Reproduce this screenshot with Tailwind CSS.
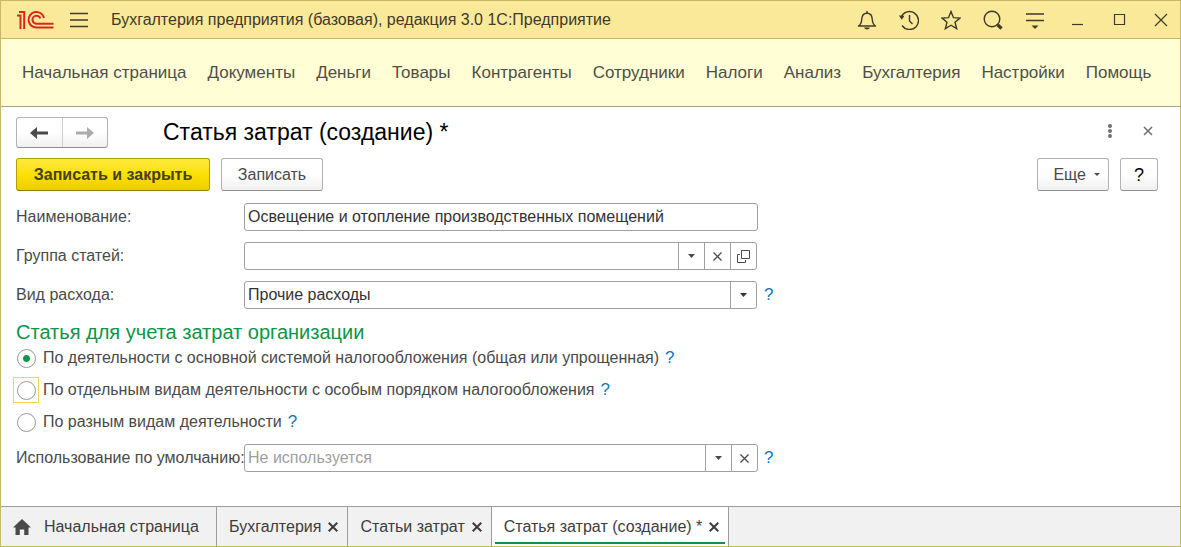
<!DOCTYPE html>
<html lang="ru">
<head>
<meta charset="utf-8">
<meta name="viewport" content="width=device-width, initial-scale=1">
<title>Статья затрат (создание)</title>
<script src="https://cdn.jsdelivr.net/npm/@tailwindcss/browser@4"></script>
</head>
<body class="flex min-h-screen flex-col border border-[#c9b869] bg-white font-['Liberation_Sans',Arial,sans-serif] text-base text-[#4a4a4a]">

<header class="flex h-[38px] items-center border-b border-[#c9b765] bg-[#fbe99a] pr-[9px] pl-4 text-[#403a28]">
  <svg class="h-5 w-[38px]" viewBox="0 0 38 20" fill="none" stroke="#d9271c" stroke-width="2" role="img" aria-label="1С">
    <path d="M0 5.500h3.500V19M2 2h5.200V19"/>
    <path d="M36.500 17.500H19.500A7.800 7.800 0 1 1 27 8"/>
    <path d="M36.500 13.700H20A4 4 0 1 1 23.300 8.500"/>
  </svg>
  <button class="ml-[15px] cursor-pointer" aria-label="Главное меню">
    <svg class="h-5 w-[18px]" viewBox="0 0 18 20" stroke="currentColor" stroke-width="1.300"><path d="M0 3.500h18M0 10h18M0 16.500h18"/></svg>
  </button>
  <p class="ml-[23px] grow whitespace-nowrap">Бухгалтерия предприятия (базовая), редакция 3.0 1С:Предприятие</p>
  <div class="flex items-center gap-[22px]">
    <button aria-label="Уведомления"><svg class="size-5" viewBox="0 0 20 20" fill="none" stroke="currentColor" stroke-width="1.400" stroke-linejoin="round"><path d="M1.500 16h17c-2-1.300-3-3-3.300-7C15 5 13 3.200 10 3.200S5 5 4.800 9c-.3 4-1.300 5.700-3.300 7z"/><path d="M10 3V1"/><path d="M7 17.500h6c-.6 1.300-1.600 2-3 2s-2.400-.7-3-2z" fill="currentColor" stroke="none"/></svg></button>
    <button aria-label="История"><svg class="size-5" viewBox="0 0 20 20" fill="none" stroke="currentColor" stroke-width="1.400"><path d="M2.200 7A9 9 0 1 1 3 15.500"/><path d="M10.500 5v6l3 3"/><path d="M-.2 5.500l5.700.3-2.700 4z" fill="currentColor" stroke="none"/></svg></button>
    <button aria-label="Избранное"><svg class="size-5" viewBox="0 0 20 20" fill="none" stroke="currentColor" stroke-width="1.400" stroke-linejoin="miter"><path d="M10 1.500l2.500 6.200 6.500.4-5 4.200 1.700 6.400L10 15.200l-5.700 3.500L6 12.300 1 8.100l6.500-.4z"/></svg></button>
    <button aria-label="Поиск"><svg class="size-5" viewBox="0 0 20 20" fill="none" stroke="currentColor" stroke-width="1.400"><circle cx="9" cy="9" r="7.800"/><path d="M14 14l1.500 1.500"/><path d="M14.800 15l3.700 3.500" stroke-width="3.200"/></svg></button>
    <button aria-label="Сервис"><svg class="size-5" viewBox="0 0 20 20" fill="none" stroke="currentColor" stroke-width="1.400"><path d="M1 4h18M1 10.500h18"/><path d="M6.500 15.500h7L10 19z" fill="currentColor" stroke="none"/></svg></button>
    <button aria-label="Свернуть"><svg class="size-5" viewBox="0 0 20 20" stroke="currentColor" stroke-width="1.200"><path d="M5 14.500h11"/></svg></button>
    <button aria-label="Развернуть"><svg class="size-5" viewBox="0 0 20 20" fill="none" stroke="currentColor" stroke-width="1.200"><path d="M5.500 4.500h10v10h-10z"/></svg></button>
    <button aria-label="Закрыть окно"><svg class="size-5" viewBox="0 0 20 20" stroke="currentColor" stroke-width="1.200"><path d="M4 4l12 12M16 4L4 16"/></svg></button>
  </div>
</header>

<nav class="flex h-[68px] items-center gap-[21px] border-b border-[#a3a68a] bg-[#fffed5] px-[21px] text-[17px] whitespace-nowrap text-[#4f4f47]">
  <a href="#">Начальная страница</a>
  <a href="#">Документы</a>
  <a href="#">Деньги</a>
  <a href="#">Товары</a>
  <a href="#">Контрагенты</a>
  <a href="#">Сотрудники</a>
  <a href="#">Налоги</a>
  <a href="#">Анализ</a>
  <a href="#">Бухгалтерия</a>
  <a href="#">Настройки</a>
  <a href="#">Помощь</a>
</nav>

<main class="px-[15px] pt-[10px]">
  <div class="flex h-[31px] items-center">
    <div class="flex h-full w-[92px] rounded-[3px] border border-[#b3b3b3] border-b-[#8f8f8f] bg-linear-to-b from-white from-50% to-[#f0f0f0]">
      <button class="flex flex-1 items-center justify-center border-r border-[#cfcfcf] text-[#4a4a4a]" aria-label="Назад"><svg class="h-3 w-[18px]" viewBox="0 0 18 12" fill="currentColor"><path d="M0 6l7-6v4.500h11v3H7V12z"/></svg></button>
      <button class="flex flex-1 items-center justify-center text-[#ababab]" aria-label="Вперед"><svg class="h-3 w-[18px]" viewBox="0 0 18 12" fill="currentColor"><path d="M18 6l-7-6v4.500H0v3h11V12z"/></svg></button>
    </div>
    <h1 class="ml-[55px] grow text-[23px] text-black">Статья затрат (создание) *</h1>
    <div class="flex items-center gap-[25px] pr-3 pb-[3px] text-[#707070]">
      <button aria-label="Действия"><svg class="h-4 w-4" viewBox="0 0 16 16" fill="currentColor"><circle cx="8" cy="3" r="2"/><circle cx="8" cy="8" r="2"/><circle cx="8" cy="13" r="2"/></svg></button>
      <button aria-label="Закрыть форму"><svg class="size-[10px]" viewBox="0 0 10 10" stroke="currentColor" stroke-width="1.600"><path d="M1 1l8 8M9 1L1 9"/></svg></button>
    </div>
  </div>

  <div class="mt-[10px] mr-[7px] flex h-[33px] gap-[11px]">
    <button class="w-[194px] rounded-[3px] border border-[#b59f00] border-b-[#8f7d00] bg-linear-to-b from-[#ffe838] via-[#fbe000] to-[#ecce00] font-bold text-[#454019]">Записать и закрыть</button>
    <button class="mr-auto w-[102px] rounded-[3px] border border-[#b3b3b3] border-b-[#8f8f8f] bg-linear-to-b from-white from-50% to-[#f0f0f0]">Записать</button>
    <button class="flex w-[72px] items-center justify-end gap-2 rounded-[3px] border border-[#b3b3b3] border-b-[#8f8f8f] bg-linear-to-b from-white from-50% to-[#f0f0f0] pr-2">Еще<svg class="h-[3px] w-[6px]" viewBox="0 0 6 3" fill="currentColor"><path d="M0 0h6L3 3z"/></svg></button>
    <button class="w-[38px] rounded-[3px] border border-[#b3b3b3] border-b-[#8f8f8f] bg-linear-to-b from-white from-50% to-[#f0f0f0] text-lg text-black" aria-label="Справка">?</button>
  </div>

  <div class="mt-3 grid grid-cols-[228px_minmax(0,514px)_auto] items-center gap-y-[11px]">
    <label for="name">Наименование:</label>
    <input id="name" type="text" value="Освещение и отопление производственных помещений" class="h-7 rounded-[3px] border border-[#a0a0a0] px-[3px] text-[#333] outline-none">
    <span></span>

    <label for="group">Группа статей:</label>
    <div class="mr-px flex h-7 rounded-[3px] border border-[#a0a0a0] text-[#4a4a4a]">
      <input id="group" type="text" class="min-w-0 grow px-[3px] outline-none">
      <button class="flex w-[26px] items-center justify-center border-l border-[#a0a0a0]" aria-label="Выбрать"><svg class="h-1 w-[7px]" viewBox="0 0 7 4" fill="currentColor"><path d="M0 0h7L3.500 4z"/></svg></button>
      <button class="flex w-[26px] items-center justify-center border-l border-[#a0a0a0]" aria-label="Очистить"><svg class="size-[9px]" viewBox="0 0 9 9" stroke="currentColor" stroke-width="1.300"><path d="M.5 .5l8 8M8.500 .5l-8 8"/></svg></button>
      <button class="flex w-[26px] items-center justify-center border-l border-[#a0a0a0]" aria-label="Открыть"><svg class="h-[13px] w-[13px]" viewBox="0 0 13 13" fill="none" stroke="currentColor"><path d="M4.500 .5h8v8h-8z"/><path d="M3 4.500H.5v8h8V10"/></svg></button>
    </div>
    <span></span>

    <label for="kind">Вид расхода:</label>
    <div class="mr-px flex h-7 rounded-[3px] border border-[#a0a0a0] text-[#333]">
      <input id="kind" type="text" value="Прочие расходы" class="min-w-0 grow px-[3px] outline-none">
      <button class="flex w-[26px] items-center justify-center border-l border-[#a0a0a0]" aria-label="Выбрать"><svg class="h-1 w-[7px]" viewBox="0 0 7 4" fill="currentColor"><path d="M0 0h7L3.500 4z"/></svg></button>
    </div>
    <a href="#" class="ml-[6px] text-[17px] text-[#0f78bb]">?</a>
  </div>

  <fieldset class="mt-[10px]">
    <legend class="text-xl leading-[26px] text-[#0b9648]">Статья для учета затрат организации</legend>
    <div class="-ml-[3px] flex h-[26px] items-center">
      <span class="flex size-[26px] items-center justify-center"><input id="r1" name="activity" type="radio" checked class="size-[19px] appearance-none rounded-full border border-[#999] bg-white checked:bg-radial checked:from-[#0b9648] checked:from-[3px] checked:to-white checked:to-[4px]"></span>
      <label for="r1" class="ml-1">По деятельности с основной системой налогообложения (общая или упрощенная)</label>
      <a href="#" class="ml-[6px] text-[17px] text-[#0f78bb]">?</a>
    </div>
    <div class="mt-[6px] -ml-[3px] flex h-[26px] items-center">
      <span class="flex size-[26px] items-center justify-center border border-[#ecd75b]"><input id="r2" name="activity" type="radio" class="size-[19px] appearance-none rounded-full border border-[#999] bg-white checked:bg-radial checked:from-[#0b9648] checked:from-[3px] checked:to-white checked:to-[4px]"></span>
      <label for="r2" class="ml-1">По отдельным видам деятельности с особым порядком налогообложения</label>
      <a href="#" class="ml-[6px] text-[17px] text-[#0f78bb]">?</a>
    </div>
    <div class="mt-[6px] -ml-[3px] flex h-[26px] items-center">
      <span class="flex size-[26px] items-center justify-center"><input id="r3" name="activity" type="radio" class="size-[19px] appearance-none rounded-full border border-[#999] bg-white checked:bg-radial checked:from-[#0b9648] checked:from-[3px] checked:to-white checked:to-[4px]"></span>
      <label for="r3" class="ml-1">По разным видам деятельности</label>
      <a href="#" class="ml-[6px] text-[17px] text-[#0f78bb]">?</a>
    </div>
  </fieldset>

  <div class="mt-[9px] mb-4 grid grid-cols-[228px_minmax(0,514px)_auto] items-center">
    <label for="usage" class="whitespace-nowrap">Использование по умолчанию:</label>
    <div class="flex h-7 rounded-[3px] border border-[#a0a0a0] text-[#4a4a4a]">
      <input id="usage" type="text" placeholder="Не используется" class="min-w-0 grow px-[3px] outline-none placeholder:text-[#a0a0a0]">
      <button class="flex w-[26px] items-center justify-center border-l border-[#a0a0a0]" aria-label="Выбрать"><svg class="h-1 w-[7px]" viewBox="0 0 7 4" fill="currentColor"><path d="M0 0h7L3.500 4z"/></svg></button>
      <button class="flex w-[26px] items-center justify-center border-l border-[#a0a0a0]" aria-label="Очистить"><svg class="size-[9px]" viewBox="0 0 9 9" stroke="currentColor" stroke-width="1.300"><path d="M.5 .5l8 8M8.500 .5l-8 8"/></svg></button>
    </div>
    <a href="#" class="ml-[6px] text-[17px] text-[#0f78bb]">?</a>
  </div>
</main>

<footer class="mt-auto flex h-10 border-t border-[#9c9c9c] bg-[#f1f1f1] whitespace-nowrap text-[#3d3d3d]">
  <a href="#" class="flex w-[216px] items-center gap-[13px] border-r border-[#9c9c9c] pl-3">
    <svg class="h-4 w-[18px]" viewBox="0 0 18 16" fill="#4a4a4a"><path d="M9 0l9 8.500h-2.500V16h-4.300v-5.500H6.800V16H2.500V8.500H0z"/></svg>Начальная страница</a>
  <div class="flex items-center gap-[7px] border-r border-[#9c9c9c] pr-[9px] pl-3"><a href="#">Бухгалтерия</a><button aria-label="Закрыть вкладку"><svg class="size-[10px]" viewBox="0 0 10 10" stroke="currentColor" stroke-width="2"><path d="M.7 .7l8.600 8.600M9.300 .7L.7 9.300"/></svg></button></div>
  <div class="flex items-center gap-[7px] border-r border-[#9c9c9c] pr-[9px] pl-3"><a href="#">Статьи затрат</a><button aria-label="Закрыть вкладку"><svg class="size-[10px]" viewBox="0 0 10 10" stroke="currentColor" stroke-width="2"><path d="M.7 .7l8.600 8.600M9.300 .7L.7 9.300"/></svg></button></div>
  <div class="flex border-r border-[#9c9c9c] bg-white px-[3px] pb-[2px]"><div class="flex items-center gap-[7px] border-b-2 border-[#12904a] pt-1 pr-[6px] pl-[9px]"><a href="#" aria-current="page">Статья затрат (создание) *</a><button aria-label="Закрыть вкладку"><svg class="size-[10px]" viewBox="0 0 10 10" stroke="currentColor" stroke-width="2"><path d="M.7 .7l8.600 8.600M9.300 .7L.7 9.300"/></svg></button></div></div>
</footer>
</body>
</html>
